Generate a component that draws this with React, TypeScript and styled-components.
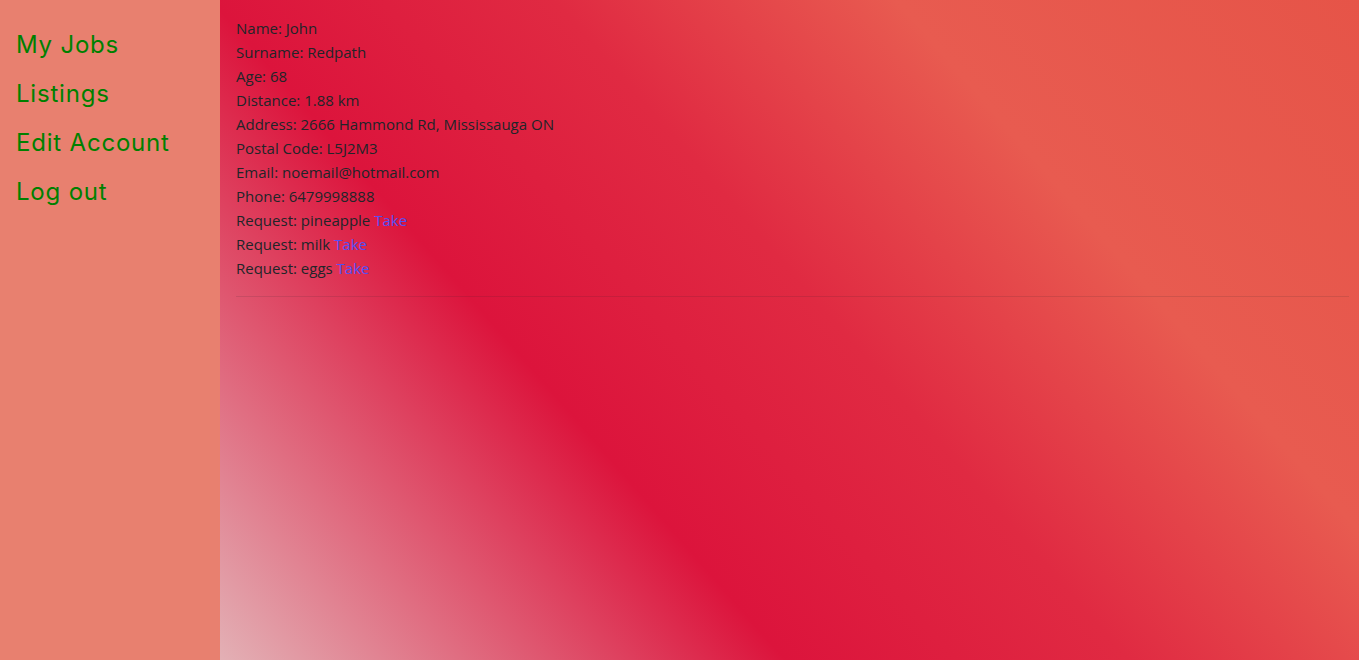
import React from "react";
import styled, { createGlobalStyle } from "styled-components";

const GlobalStyle = createGlobalStyle`
  html, body { margin: 0; padding: 0; height: 100%; }
  body { font-family: "Open Sans", "Noto Sans", sans-serif; color: #212529; }
  #root { height: 100%; }
`;

const Layout = styled.div`
  display: flex;
  width: 100%;
  height: 660px;
`;

const Sidebar = styled.nav`
  width: 220px;
  flex-shrink: 0;
  background: #e8806f;
  display: flex;
  flex-direction: column;
  padding: 27px 0 0 16px;
  box-sizing: border-box;
  gap: 13px;
`;

const NavLink = styled.a`
  font-family: "Inter", "Lato", sans-serif;
  font-size: 24px;
  line-height: 36px;
  color: #008000;
  text-decoration: none;
  letter-spacing: 0.8px;
`;

const Main = styled.main`
  flex: 1;
  padding: 16px 10px 0 16px;
  box-sizing: border-box;
  background: linear-gradient(
    49deg,
    #e3b0b5 0%,
    #dc143c 33%,
    #e02a42 53%,
    #e85b50 73%,
    #e65448 100%
  );
`;

const Line = styled.div`
  font-size: 15px;
  line-height: 24px;
`;

const TakeLink = styled.a`
  color: #5350f5;
  text-decoration: none;
  cursor: pointer;
`;

const Divider = styled.hr`
  margin: 16px 0;
  border: 0;
  border-top: 1px solid #212529;
  opacity: 0.12;
`;

const info: [string, string][] = [
  ["Name", "John"],
  ["Surname", "Redpath"],
  ["Age", "68"],
  ["Distance", "1.88 km"],
  ["Address", "2666 Hammond Rd, Mississauga ON"],
  ["Postal Code", "L5J2M3"],
  ["Email", "noemail@hotmail.com"],
  ["Phone", "6479998888"],
];

const requests = ["pineapple", "milk", "eggs"];

export default function App() {
  return (
    <>
      <GlobalStyle />
      <Layout>
        <Sidebar>
          <NavLink href="#">My Jobs</NavLink>
          <NavLink href="#">Listings</NavLink>
          <NavLink href="#">Edit Account</NavLink>
          <NavLink href="#">Log out</NavLink>
        </Sidebar>
        <Main>
          {info.map(([k, v]) => (
            <Line key={k}>
              {k}: {v}
            </Line>
          ))}
          {requests.map((r) => (
            <Line key={r}>
              Request: {r} <TakeLink>Take</TakeLink>
            </Line>
          ))}
          <Divider />
        </Main>
      </Layout>
    </>
  );
}
